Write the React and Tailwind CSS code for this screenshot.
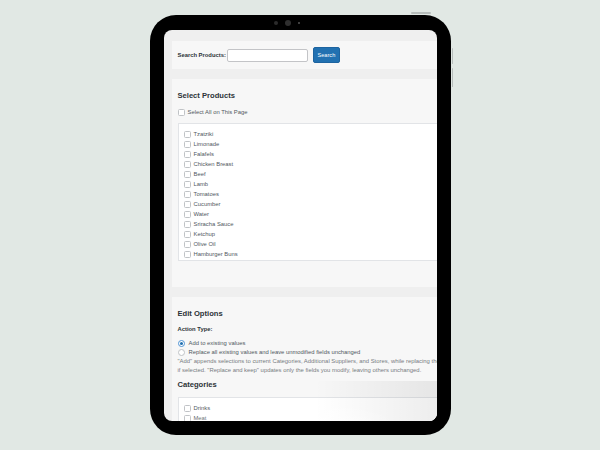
import { useState } from 'react';

const products = [
    'Tzatziki',
    'Limonade',
    'Falafels',
    'Chicken Breast',
    'Beef',
    'Lamb',
    'Tomatoes',
    'Cucumber',
    'Water',
    'Sriracha Sauce',
    'Ketchup',
    'Olive Oil',
    'Hamburger Buns',
    'Pita Bread',
];

const categories = ['Drinks', 'Meat'];

const Checkbox = () => (
    <span className="w-[7px] h-[7px] shrink-0 rounded-[1.5px] border border-[#c0c3c6] bg-white" />
);

const CheckRow = ({ label }) => (
    <label className="h-[10px] flex items-center gap-[3px]">
        <Checkbox />
        <span>{label}</span>
    </label>
);

const Radio = ({ checked }) => (
    <span
        className={`w-[7px] h-[7px] shrink-0 rounded-full border bg-white flex items-center justify-center ${checked ? 'border-[#4f94d4]' : 'border-[#c0c3c6]'}`}
    >
        {checked && <span className="w-[3px] h-[3px] rounded-full bg-[#2271b1]" />}
    </span>
);

const App = () => {
    const [query, setQuery] = useState('');
    const [action, setAction] = useState('add');

    return (
        <div className="w-[600px] h-[450px] bg-[#e1e8e4] flex items-center justify-center font-['Liberation_Sans',Arial,sans-serif]">
            <div className="relative w-[301px] h-[420px] bg-black rounded-[26px] pt-[15px] px-[14px] pb-[14px]">
                {/* hardware buttons */}
                <span className="absolute left-[261px] -top-[3px] w-[20px] h-[1.5px] rounded-full bg-[#b7bdbb]" />
                <span className="absolute left-[302px] top-[33px] w-[1.5px] h-[16px] rounded-full bg-[#b7bdbb]" />
                <span className="absolute left-[302px] top-[53px] w-[1.5px] h-[19px] rounded-full bg-[#b7bdbb]" />

                {/* camera */}
                <div className="absolute top-[5px] left-[124px] flex items-center gap-[7px]">
                    <span className="w-[4px] h-[4px] rounded-full bg-[#2b2b2b]" />
                    <span className="w-[6px] h-[6px] rounded-full bg-[#2f2f2f]" />
                    <span className="w-[2px] h-[2px] rounded-full bg-[#555]" />
                </div>

                {/* screen */}
                <div className="relative h-full rounded-[8px] bg-[#efefef] overflow-hidden pt-[11px] pl-[8px] text-[5.85px] text-[#50575e]">
                    <div className="w-[300px] flex flex-col gap-[10px]">
                        {/* search */}
                        <div className="h-[28px] bg-[#f7f7f7] flex items-center pl-[6px]">
                            <span className="font-bold text-[#2c3338] mr-[1px]">Search Products:</span>
                            <input
                                value={query}
                                onChange={(e) => setQuery(e.target.value)}
                                className="w-[81px] h-[13px] bg-white border-[0.6px] border-[#c3c4c7] rounded-[2px] outline-none"
                            />
                            <button className="ml-[5px] w-[27px] h-[16px] bg-[#2271b1] text-white rounded-[2px] text-[5.6px] border-[0.6px] border-[#1e64a0]">
                                Search
                            </button>
                        </div>

                        {/* select products */}
                        <div className="bg-[#f7f7f7] pt-[12px] pl-[6px] pb-[26px]">
                            <h2 className="h-[10px] flex items-center text-[7.6px] font-bold text-[#2c3338]">Select Products</h2>
                            <div className="mt-[6px]">
                                <CheckRow label="Select All on This Page" />
                            </div>
                            <div className="mt-[6px] h-[138px] overflow-hidden bg-white border-[0.6px] border-[#e2e4e7] pt-[5px] pl-[5px]">
                                {products.map((p) => (
                                    <CheckRow key={p} label={p} />
                                ))}
                            </div>
                        </div>

                        {/* edit options */}
                        <div className="bg-[#f7f7f7] pt-[12px] pl-[6px] pb-[20px]">
                            <h2 className="h-[10px] flex items-center text-[7.6px] font-bold text-[#2c3338]">Edit Options</h2>
                            <p className="mt-[5px] h-[10px] flex items-center font-bold text-[#2c3338]">Action Type:</p>
                            <div className="mt-[4.5px]">
                                <label className="h-[9px] flex items-center gap-[4px]" onClick={() => setAction('add')}>
                                    <Radio checked={action === 'add'} />
                                    <span>Add to existing values</span>
                                </label>
                                <label className="h-[9px] flex items-center gap-[4px]" onClick={() => setAction('replace')}>
                                    <Radio checked={action === 'replace'} />
                                    <span>Replace all existing values and leave unmodified fields unchanged</span>
                                </label>
                            </div>
                            <p className="leading-[9px] text-[5.9px] text-[#787c82]">
                                <span className="block whitespace-nowrap">
                                    "Add" appends selections to current Categories, Additional Suppliers, and Stores, while replacing the others
                                </span>
                                <span className="block whitespace-nowrap">
                                    if selected. "Replace and keep" updates only the fields you modify, leaving others unchanged.
                                </span>
                            </p>
                            <h2 className="mt-[5.5px] h-[10px] flex items-center text-[7.6px] font-bold text-[#2c3338]">Categories</h2>
                            <div className="mt-[7px] h-[40px] bg-white border-[0.6px] border-[#e2e4e7] pt-[5px] pl-[5px]">
                                {categories.map((c) => (
                                    <CheckRow key={c} label={c} />
                                ))}
                            </div>
                        </div>
                    </div>

                    {/* glass reflection at bottom */}
                    <div className="absolute left-0 right-0 bottom-0 h-[40px] bg-[radial-gradient(ellipse_55%_90%_at_45%_115%,rgba(255,255,255,0.95)_0%,rgba(255,255,255,0)_75%),linear-gradient(to_left,rgba(0,0,0,0.07),rgba(0,0,0,0)_45%)] pointer-events-none" />
                </div>
            </div>
        </div>
    );
};

export default App;
